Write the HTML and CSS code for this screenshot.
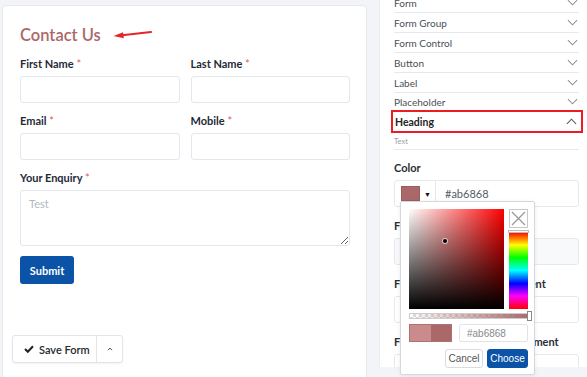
FILE: index.html
```html
<!DOCTYPE html>
<html lang="en">
<head>
  <meta charset="UTF-8" />
  <meta name="viewport" content="width=device-width, initial-scale=1.0"/>
  <title>Form Styler</title>
  <link rel="stylesheet" href="styles.css">
</head>
<body>
<div class="page">

  <!-- Form preview -->
  <main class="form-card">
    <div class="form-body">
      <div class="title-row">
        <h1 class="form-title">Contact Us</h1>
        <svg class="pointer" width="40" height="8" viewBox="0 0 40 8">
          <path d="M9 4.2 L38 1" stroke="#e3262b" stroke-width="2" stroke-linecap="round"/>
          <path d="M0.5 5 L10 1.2 L10.8 7.2 Z" fill="#e3262b"/>
        </svg>
      </div>

      <div class="grid">
        <div class="field">
          <label>First Name <span class="req">*</span></label>
          <input class="input" type="text">
        </div>
        <div class="field">
          <label>Last Name <span class="req">*</span></label>
          <input class="input" type="text">
        </div>
        <div class="field">
          <label>Email <span class="req">*</span></label>
          <input class="input" type="text">
        </div>
        <div class="field">
          <label>Mobile <span class="req">*</span></label>
          <input class="input" type="text">
        </div>
      </div>

      <div class="field">
        <label>Your Enquiry <span class="req">*</span></label>
        <textarea class="input textarea" placeholder="Test"></textarea>
      </div>

      <button class="btn-submit">Submit</button>
    </div>

    <div class="save-bar">
      <button class="save-main">
        <svg width="10" height="8" viewBox="0 0 10 8"><path d="M1 4 L3.8 6.8 L9 1.2" fill="none" stroke="#1f2328" stroke-width="2"/></svg>
        Save Form
      </button>
      <button class="save-more">
        <svg width="6" height="4" viewBox="0 0 6 4"><path d="M1 3.2 L3 1 L5 3.2" fill="none" stroke="#555" stroke-width="1"/></svg>
      </button>
    </div>
  </main>

  <!-- Style settings -->
  <aside class="panel-wrap">
    <div class="panel">
      <ul class="acc">
        <li>Form <svg class="chev" viewBox="0 0 12 7"><path d="M1 1 L6 6 L11 1"/></svg></li>
        <li>Form Group <svg class="chev" viewBox="0 0 12 7"><path d="M1 1 L6 6 L11 1"/></svg></li>
        <li>Form Control <svg class="chev" viewBox="0 0 12 7"><path d="M1 1 L6 6 L11 1"/></svg></li>
        <li>Button <svg class="chev" viewBox="0 0 12 7"><path d="M1 1 L6 6 L11 1"/></svg></li>
        <li>Label <svg class="chev" viewBox="0 0 12 7"><path d="M1 1 L6 6 L11 1"/></svg></li>
        <li>Placeholder <svg class="chev" viewBox="0 0 12 7"><path d="M1 1 L6 6 L11 1"/></svg></li>
      </ul>
      <div class="acc-open">Heading <svg class="chev up" viewBox="0 0 12 7"><path d="M1 6 L6 1 L11 6"/></svg></div>
      <div class="hint">Text</div>

      <div class="settings">
        <div class="setting">
          <div class="setting-label">Color</div>
          <div class="color-group">
            <div class="color-addon">
              <span class="swatch"></span>
              <span class="caret">&#9660;</span>
            </div>
            <div class="color-value">#ab6868</div>
          </div>
        </div>
        <div class="setting">
          <div class="setting-label">Font Family</div>
          <div class="box box-soft"></div>
        </div>
        <div class="setting">
          <div class="setting-label">Font Line Height Measurement</div>
          <div class="box"></div>
        </div>
        <div class="setting">
          <div class="setting-label">Font Letter Spacing Measurement</div>
          <div class="box"></div>
        </div>
      </div>
    </div>

    <!-- colour picker popup -->
    <div class="picker">
      <div class="picker-top">
        <div class="sat-val"><span class="sv-dot"></span></div>
        <div class="picker-side">
          <div class="clear-btn">
            <svg width="17" height="17" viewBox="0 0 17 17"><path d="M2 2 L15 15 M15 2 L2 15" stroke="#9a9a9a" stroke-width="1.3"/></svg>
          </div>
          <div class="hue"><span class="hue-handle"></span></div>
        </div>
      </div>
      <div class="alpha"><span class="alpha-handle"></span></div>
      <div class="picker-row">
        <div class="preview">
          <span class="prev-old"></span>
          <span class="prev-new"></span>
        </div>
        <div class="hex-input">#ab6868</div>
      </div>
      <div class="picker-actions">
        <button class="pk-cancel">Cancel</button>
        <button class="pk-choose">Choose</button>
      </div>
    </div>
  </aside>

</div>
</body>
</html>
```

FILE: styles.css
```css
body {
  margin: 0;
  background: #f3f4f7;
  font-family: Lato, "Liberation Sans", sans-serif;
  color: #1f2a37;
}
.page {
  display: flex;
  height: 377px;
  overflow: hidden;
}

/* ---------- Form preview ---------- */
.form-card {
  margin: 5px 0 0 2px;
  width: 363px;
  height: 400px;
  flex: none;
  background: #fff;
  border: 1px solid #e6e8ec;
  border-radius: 4px 4px 0 0;
}
.form-body {
  padding: 17px 16px 0 17px;
}
.title-row {
  display: flex;
  align-items: center;
  gap: 12px;
  height: 24px;
  margin-bottom: 10px;
}
.form-title {
  margin: 0;
  font-size: 16.5px;
  font-weight: 600;
  color: #ab6868;
  line-height: 24px;
}
.pointer { margin-top: -1px; }
.grid {
  display: grid;
  grid-template-columns: 1fr 1fr;
  column-gap: 11px;
}
.field {
  display: flex;
  flex-direction: column;
  margin-bottom: 11px;
}
.field label {
  font-size: 11px;
  font-weight: 700;
  line-height: 14px;
  margin-bottom: 5px;
}
.req { color: #e05a5a; font-weight: 400; }
.input {
  box-sizing: border-box;
  height: 27px;
  border: 1px solid #e3e6ea;
  border-radius: 3px;
  background: #fff;
  font-family: inherit;
  font-size: 11px;
  padding: 4px 8px;
  outline: none;
}
.textarea {
  height: 56px;
  padding-top: 6px;
  resize: vertical;
  color: #333;
}
.textarea::placeholder { color: #b3b7bd; }
.btn-submit {
  display: block;
  width: 54px;
  height: 28px;
  margin-top: -1px;
  border: none;
  border-radius: 3px;
  background: #0b53a6;
  color: #fff;
  font-family: inherit;
  font-size: 11px;
  font-weight: 700;
  padding: 0;
}
.save-bar {
  display: flex;
  width: 111px;
  height: 28px;
  box-sizing: border-box;
  margin: 51px 0 0 9px;
  border: 1px solid #e2e5ea;
  border-radius: 3px;
  background: #fff;
  box-shadow: 0 1px 2px rgba(0,0,0,0.06);
}
.save-bar button {
  border: none;
  background: none;
  padding: 0;
  font-family: inherit;
  display: flex;
  align-items: center;
}
.save-main {
  width: 84px;
  gap: 5px;
  padding-left: 11px !important;
  font-size: 11px;
  font-weight: 600;
  color: #26292e;
  border-right: 1px solid #e2e5ea !important;
}
.save-more {
  flex: 1;
  justify-content: center;
}

/* ---------- Settings panel ---------- */
.panel-wrap {
  position: relative;
  flex: 1;
  margin-left: 12px;
}
.panel {
  height: 367px;
  overflow: hidden;
  box-sizing: border-box;
  padding: 0 8px 0 14px;
  background: #fff;
  border-left: 1px solid #eceef1;
  font-size: 10px;
}
.acc {
  list-style: none;
  margin: -7px 0 0;
  padding: 0;
}
.acc li {
  display: flex;
  justify-content: space-between;
  align-items: center;
  height: 20px;
  box-sizing: border-box;
  border-bottom: 1px solid #e6e8ec;
  color: #4a4f57;
  padding-right: 1px;
}
.acc li:last-child { border-bottom: none; height: 17px; }
.chev {
  width: 11px;
  height: 7px;
  fill: none;
  stroke: #8a8f96;
  stroke-width: 1.1;
}
.acc-open {
  display: flex;
  justify-content: space-between;
  align-items: center;
  height: 23px;
  box-sizing: border-box;
  margin: 0 -4px 0 -3px;
  padding: 0 4px 0 2px;
  border: 2px solid #ec1c24;
  font-weight: 700;
  font-size: 10.5px;
  color: #1f2328;
}
.acc-open .chev { stroke: #555; }
.hint {
  height: 17px;
  box-sizing: border-box;
  border-bottom: 1px solid #e6e8ec;
  font-size: 7.5px;
  color: #9a9ea4;
  padding-top: 4px;
}
.settings {
  padding-top: 11px;
  font-size: 11px;
}
.setting { margin-bottom: 12px; }
.setting-label {
  font-weight: 700;
  color: #2b2f35;
  line-height: 14px;
  margin-bottom: 5px;
  white-space: nowrap;
}
.color-group {
  display: flex;
  height: 27px;
  box-sizing: border-box;
  border: 1px solid #e6e8ec;
  border-radius: 3px;
}
.color-addon {
  width: 41px;
  display: flex;
  align-items: center;
  padding-left: 6px;
  box-sizing: border-box;
  border-right: 1px solid #e6e8ec;
}
.swatch {
  width: 17px;
  height: 13px;
  background: #ab6868;
  border: 1px solid #9a5e5e;
}
.caret {
  font-size: 7px;
  margin-left: 4px;
  color: #111;
}
.color-value {
  display: flex;
  align-items: center;
  padding-left: 9px;
  color: #555b63;
}
.box {
  height: 27px;
  box-sizing: border-box;
  border: 1px solid #e6e8ec;
  border-radius: 3px;
}
.box-soft { background: #f8f9fb; }

/* ---------- Colour picker ---------- */
.picker {
  position: absolute;
  left: 21px;
  top: 201px;
  width: 135px;
  height: 174px;
  box-sizing: border-box;
  padding: 7px 3px 0 8px;
  background: #fff;
  border: 1px solid #d6d8dc;
  border-radius: 2px;
  box-shadow: 0 1px 4px rgba(0,0,0,0.08);
  font-family: "Liberation Sans", Arial, sans-serif;
  font-size: 10px;
}
.picker-top {
  display: flex;
  gap: 5px;
  height: 100px;
}
.sat-val {
  position: relative;
  width: 95px;
  background: linear-gradient(to top, #000, rgba(0,0,0,0)), linear-gradient(to right, #fff, #f00);
}
.sv-dot {
  position: absolute;
  left: 34px;
  top: 30px;
  width: 4px;
  height: 4px;
  border-radius: 50%;
  background: #000;
  box-shadow: 0 0 0 1px rgba(255,255,255,0.6);
}
.picker-side {
  display: flex;
  flex-direction: column;
  gap: 4px;
  width: 19px;
}
.clear-btn {
  height: 19px;
  box-sizing: border-box;
  border: 1px solid #c8c8c8;
  background: #fff;
  display: flex;
  align-items: center;
  justify-content: center;
}
.hue {
  position: relative;
  flex: 1;
  background: linear-gradient(to bottom, #f00 0%, #ff0 17%, #0f0 33%, #0ff 50%, #00f 67%, #f0f 83%, #f00 100%);
}
.hue-handle {
  position: absolute;
  left: -1px;
  right: -1px;
  top: -2px;
  height: 3px;
  background: #fff;
  border: 1px solid #bbb;
  box-sizing: border-box;
}
.alpha {
  position: relative;
  width: 122px;
  height: 6px;
  margin-top: 4px;
  border: 1px solid #ccc;
  box-sizing: border-box;
  background:
    linear-gradient(to right, rgba(171,104,104,0), #ab6868),
    repeating-conic-gradient(#ddd 0 25%, #fff 0 50%) 0 0 / 6px 6px;
}
.alpha-handle {
  position: absolute;
  right: -2px;
  top: -3px;
  width: 5px;
  height: 10px;
  background: #fff;
  border: 1px solid #888;
  box-sizing: border-box;
}
.picker-row {
  display: flex;
  gap: 7px;
  margin-top: 5px;
  height: 18px;
}
.preview {
  display: flex;
  width: 43px;
  border: 1px solid #b07070;
  box-sizing: border-box;
}
.prev-old { flex: 1; background: #c98b8b; }
.prev-new { flex: 1; background: #ab6868; }
.hex-input {
  width: 69px;
  box-sizing: border-box;
  border: 1px solid #e3e3e3;
  border-radius: 2px;
  display: flex;
  align-items: center;
  padding-left: 7px;
  color: #8a8a8a;
}
.picker-actions {
  display: flex;
  justify-content: flex-end;
  gap: 4px;
  margin: 7px 3px 0 0;
}
.picker-actions button {
  height: 19px;
  padding: 0;
  border-radius: 3px;
  font-family: inherit;
  font-size: 10px;
}
.pk-cancel {
  width: 38px;
  background: #fff;
  border: 1px solid #dcdcdc;
  color: #555;
}
.pk-choose {
  width: 41px;
  background: #0b53a6;
  border: 1px solid #0b53a6;
  color: #fff;
}
```
